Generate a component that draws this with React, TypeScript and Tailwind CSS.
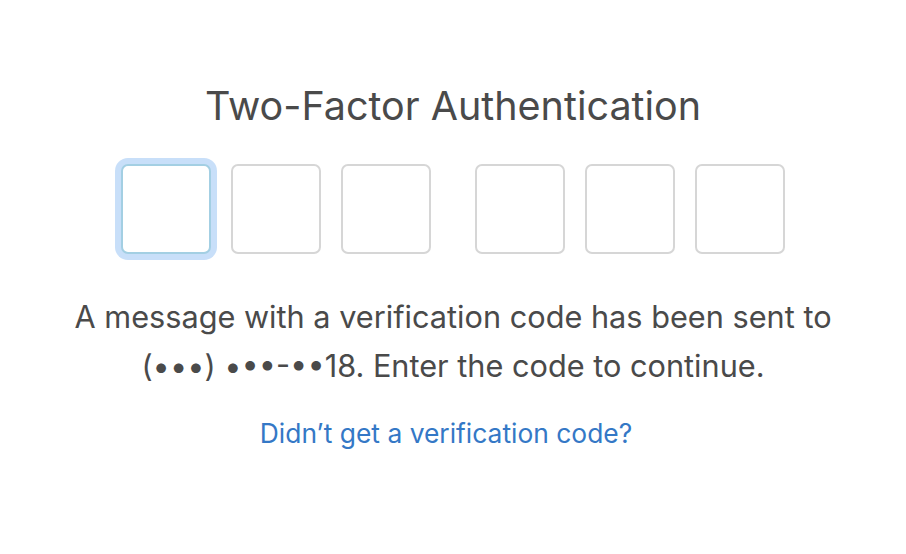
import React from "react";

function Box({ focused }: { focused?: boolean }) {
  return (
    <div
      className={
        focused
          ? "w-[90px] h-[90px] rounded-[7px] border-2 border-[#a3cfe3] ring-[6px] ring-[#c8dff9] bg-white"
          : "w-[90px] h-[90px] rounded-[7px] border-2 border-[#d6d6d6] bg-white"
      }
    />
  );
}

export default function App() {
  return (
    <div
      className="w-[906px] h-[554px] bg-white flex flex-col items-center text-[#4a4a4a]"
      style={{ fontFamily: "Inter, 'Noto Sans', sans-serif" }}
    >
      <h1 className="mt-[80px] text-[39.5px] leading-[52px]">Two-Factor Authentication</h1>
      <div className="mt-[32px] flex gap-[44px]">
        <div className="flex gap-[20px]">
          <Box focused />
          <Box />
          <Box />
        </div>
        <div className="flex gap-[20px]">
          <Box />
          <Box />
          <Box />
        </div>
      </div>
      <p className="mt-[38px] text-[30.7px] leading-[49px] text-center">
        A message with a verification code has been sent to
        <br />
        (•••) •••-••18. Enter the code to continue.
      </p>
      <a className="mt-[26px] mr-[14px] text-[26.4px] leading-[34px] text-[#3478c6]">Didn’t get a verification code?</a>
    </div>
  );
}
